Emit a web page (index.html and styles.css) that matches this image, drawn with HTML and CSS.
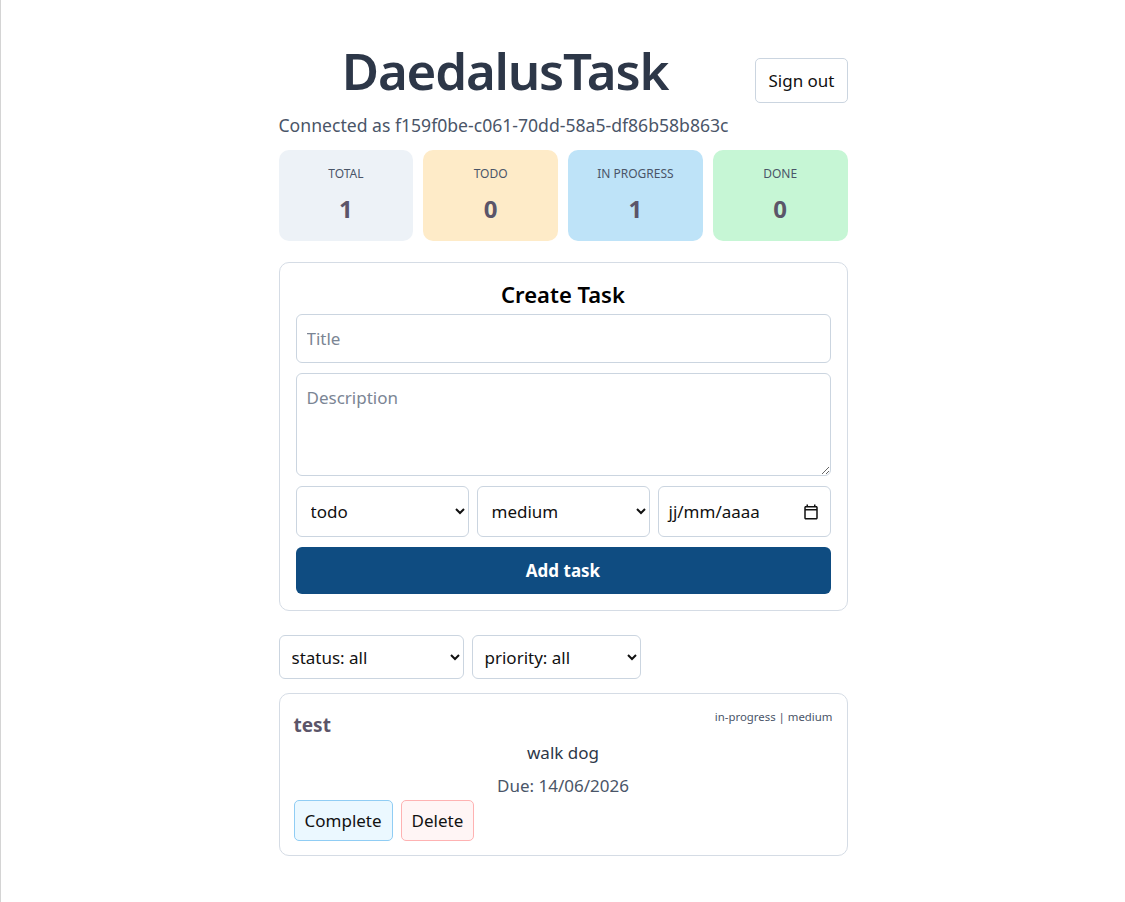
FILE: index.html
```html
<!DOCTYPE html>
<html lang="fr">
<head>
  <meta charset="UTF-8">
  <title>DaedalusTask</title>
  <link rel="stylesheet" href="styles.css">
</head>
<body>
<div class="page">
  <div class="app">

    <div class="header">
      <h1>DaedalusTask</h1>
      <button class="btn signout">Sign out</button>
    </div>
    <p class="user">Connected as f159f0be-c061-70dd-58a5-df86b58b863c</p>

    <!-- Stats -->
    <div class="stats">
      <div class="stat total"><span class="stat-label">TOTAL</span><span class="stat-value">1</span></div>
      <div class="stat todo"><span class="stat-label">TODO</span><span class="stat-value">0</span></div>
      <div class="stat progress"><span class="stat-label">IN PROGRESS</span><span class="stat-value">1</span></div>
      <div class="stat done"><span class="stat-label">DONE</span><span class="stat-value">0</span></div>
    </div>

    <!-- Create form -->
    <div class="card create">
      <h2>Create Task</h2>
      <input class="field" type="text" placeholder="Title">
      <textarea class="field desc" placeholder="Description"></textarea>
      <div class="row">
        <select class="field">
          <option>todo</option>
          <option>in-progress</option>
          <option>done</option>
        </select>
        <select class="field">
          <option>low</option>
          <option selected>medium</option>
          <option>high</option>
        </select>
        <div class="field date">
          <span>jj/mm/aaaa</span>
          <svg width="18" height="18" viewBox="0 0 24 24"><path d="M19 4h-1V2h-2v2H8V2H6v2H5c-1.1 0-2 .9-2 2v14c0 1.1.9 2 2 2h14c1.1 0 2-.9 2-2V6c0-1.1-.9-2-2-2zm0 16H5V10h14v10zm0-12H5V6h14v2z" fill="#111"/></svg>
        </div>
      </div>
      <button class="btn add">Add task</button>
    </div>

    <!-- Filters -->
    <div class="filters">
      <select class="field status-filter">
        <option>status: all</option>
        <option>status: todo</option>
        <option>status: in-progress</option>
        <option>status: done</option>
      </select>
      <select class="field priority-filter">
        <option>priority: all</option>
        <option>priority: low</option>
        <option>priority: medium</option>
        <option>priority: high</option>
      </select>
    </div>

    <!-- Tasks -->
    <div class="card task">
      <div class="task-top">
        <h3>test</h3>
        <span class="meta">in-progress | medium</span>
      </div>
      <p class="task-desc">walk dog</p>
      <p class="task-due">Due: 14/06/2026</p>
      <div class="actions">
        <button class="btn complete">Complete</button>
        <button class="btn delete">Delete</button>
      </div>
    </div>

  </div>
</div>
</body>
</html>
```

FILE: styles.css
```css
body {
  margin: 0;
  font-family: "Noto Sans", "Open Sans", sans-serif;
  background: #fff;
  color: #1a202c;
}
.page {
  min-height: 100vh;
  border-left: 1px solid #d4d4d4;
  box-sizing: border-box;
}
.app {
  width: 569px;
  margin: 0 auto;
  padding: 36px 0 40px;
}
.header {
  display: flex;
  align-items: center;
  gap: 24px;
}
h1 {
  flex: 1;
  margin: 0;
  text-align: center;
  font-size: 51px;
  font-weight: 600;
  letter-spacing: -1.2px;
  line-height: 64px;
  color: #2d3748;
}
.btn {
  font-family: inherit;
  cursor: pointer;
}
.signout {
  margin-top: 22px;
  padding: 10px 12px;
  font-size: 17px;
  background: #fff;
  border: 1px solid #cbd5e0;
  border-radius: 5px;
  color: #111;
}
.user {
  margin: 10px 0 13px;
  font-size: 17.6px;
  color: #4a5568;
}
.stats {
  display: grid;
  grid-template-columns: repeat(4, 1fr);
  gap: 10px;
}
.stat {
  height: 91px;
  border-radius: 10px;
  display: flex;
  flex-direction: column;
  align-items: center;
  padding-top: 15px;
  box-sizing: border-box;
}
.stat-label {
  font-size: 12px;
  color: #4a5568;
}
.stat-value {
  margin-top: 10px;
  font-size: 24px;
  font-weight: 700;
  color: #5b5569;
}
.total { background: #edf2f7; }
.todo { background: #feebc8; }
.progress { background: #bee3f8; }
.done { background: #c6f6d5; }

.card {
  border: 1px solid #d5dce5;
  border-radius: 10px;
  box-sizing: border-box;
}
.create {
  margin-top: 21px;
  padding: 16px;
  display: flex;
  flex-direction: column;
  gap: 10px;
}
h2 {
  margin: 3px 0 -2px;
  text-align: center;
  font-size: 22px;
  font-weight: 600;
  color: #000;
  line-height: 24px;
}
.field {
  font-family: inherit;
  font-size: 17px;
  color: #111;
  border: 1px solid #cbd5e0;
  border-radius: 6px;
  background: #fff;
  box-sizing: border-box;
}
input.field {
  height: 49px;
  padding: 0 10px;
}
.desc {
  height: 103px;
  padding: 12px 10px;
  resize: vertical;
}
.field::placeholder {
  color: #7b8594;
}
.row {
  display: grid;
  grid-template-columns: repeat(3, 1fr);
  gap: 8px;
}
.row .field {
  height: 51px;
  padding: 0 10px;
}
.date {
  display: flex;
  align-items: center;
  justify-content: space-between;
}
.add {
  height: 47px;
  border: none;
  border-radius: 6px;
  background: #0f4c81;
  color: #fff;
  font-size: 17px;
  font-weight: 700;
}
.filters {
  margin-top: 24px;
  display: flex;
  gap: 8px;
}
.filters .field {
  height: 44px;
  padding: 0 8px;
}
.status-filter { width: 185px; }
.priority-filter { width: 169px; }

.task {
  margin-top: 14px;
  padding: 12px 14px 14px;
}
.task-top {
  display: flex;
  justify-content: space-between;
  align-items: flex-start;
}
h3 {
  margin: 6px 0 0;
  font-size: 19px;
  font-weight: 700;
  color: #5b5569;
}
.meta {
  font-size: 11.4px;
  color: #4a5568;
  margin-top: 3px;
}
.task-desc {
  margin: 3px 0 0;
  text-align: center;
  font-size: 17px;
  color: #2d3748;
}
.task-due {
  margin: 10px 0 0;
  text-align: center;
  font-size: 17px;
  color: #4a5568;
}
.actions {
  display: flex;
  gap: 8px;
  margin-top: 3px;
}
.actions .btn {
  height: 41px;
  padding: 0 10px;
  font-size: 17px;
  border-radius: 5px;
  color: #111;
}
.complete {
  background: #ebf8ff;
  border: 1px solid #90cdf4;
}
.delete {
  background: #fff5f5;
  border: 1px solid #feb2b2;
}
```
